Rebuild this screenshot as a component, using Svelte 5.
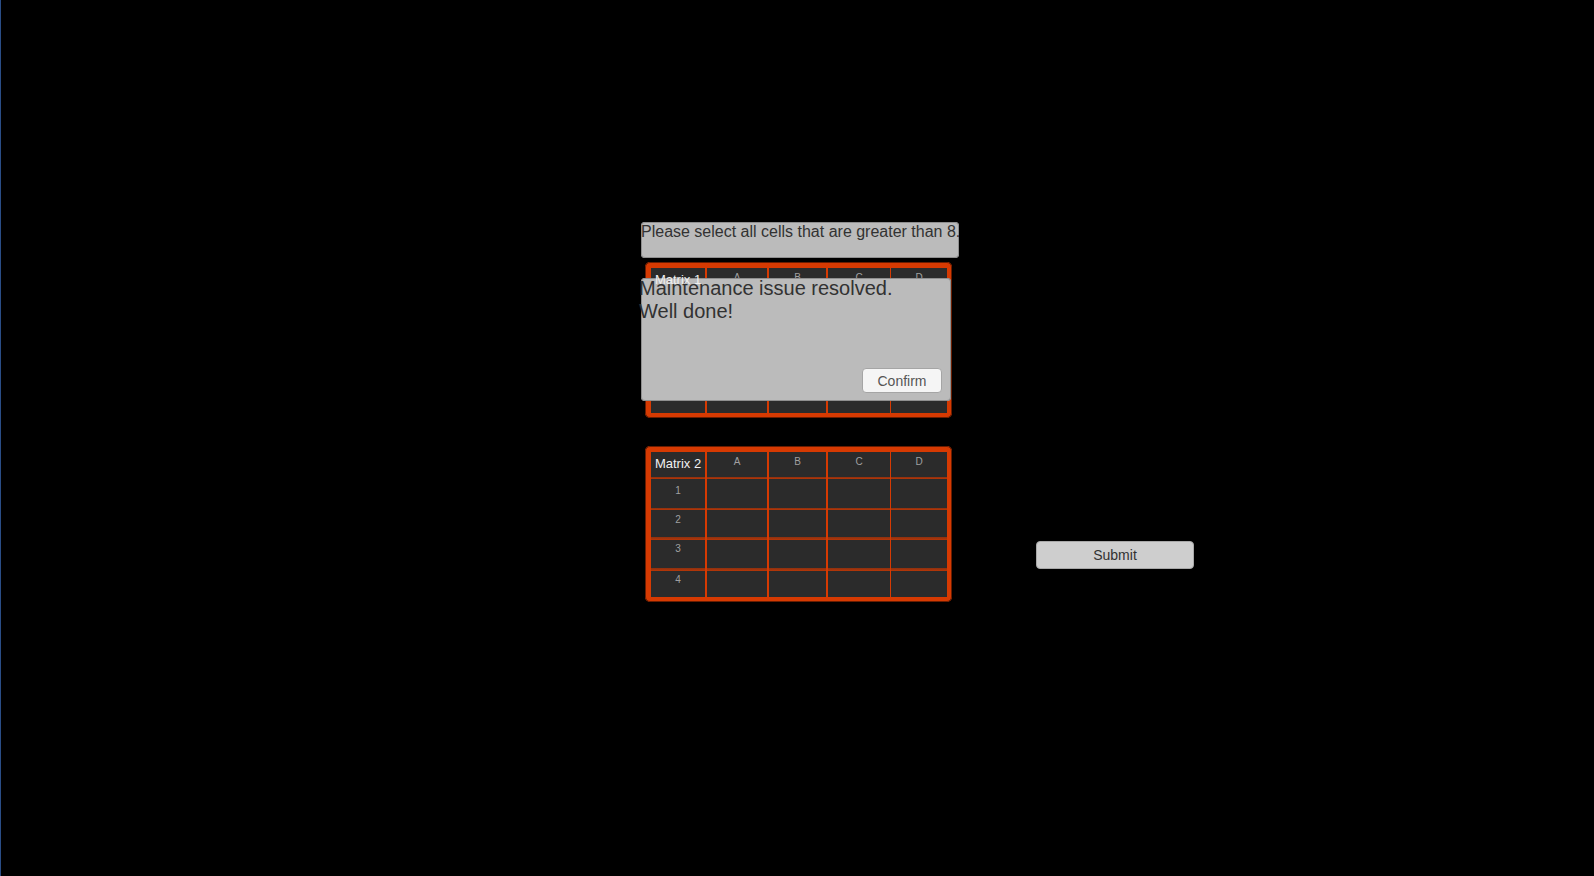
<script>
  const columns = ['A', 'B', 'C', 'D'];
  const rows = [1, 2, 3, 4];
  const matrices = ['Matrix 1', 'Matrix 2'];
  let open = $state(true);
</script>

<main>
  <section class="task">
    <p class="prompt">Please select all cells that are greater than 8.</p>
    <div class="matrices">
      {#each matrices as name}
        <table>
          <thead>
            <tr>
              <th class="name" scope="col"><span>{name}</span></th>
              {#each columns as c}<th scope="col">{c}</th>{/each}
            </tr>
          </thead>
          <tbody>
            {#each rows as r}
              <tr>
                <th scope="row">{r}</th>
                {#each columns as c}<td></td>{/each}
              </tr>
            {/each}
          </tbody>
        </table>
      {/each}
      {#if open}
        <div class="dialog" role="dialog" aria-label="Maintenance">
          <p>Maintenance issue resolved.<br />Well done!</p>
          <button class="confirm" onclick={() => (open = false)}>Confirm</button>
        </div>
      {/if}
    </div>
  </section>
  <button class="submit">Submit</button>
</main>

<style>
  :global(body) {
    margin: 0;
    background: #000;
  }
  main {
    box-sizing: border-box;
    min-height: 100vh;
    padding: 222px 0 24px 5px;
    border-left: 1px solid #2a4d86;
    display: grid;
    grid-template-columns: 1fr 318px 1fr;
    align-items: end;
    align-content: start;
    background: #000;
    font-family: "Liberation Sans", Arial, sans-serif;
    color: #323232;
  }
  p {
    margin: 0;
  }
  .task {
    grid-column: 2;
  }
  .prompt {
    height: 36px;
    border-radius: 4px;
    box-shadow: inset 0 0 0 1px #8f8f8f;
    background: #bbb;
    font-size: 16px;
    line-height: 20px;
    white-space: nowrap;
  }
  .matrices {
    position: relative;
    display: flex;
    flex-direction: column;
    gap: 28px;
    margin: 4px 7px 0 4px;
  }
  table {
    box-sizing: border-box;
    width: 100%;
    table-layout: fixed;
    border-collapse: separate;
    border-spacing: 0;
    border: 5px solid #d63a02;
    border-width: 6px 5px 5px 6px;
    outline: 1px solid #6a1d01;
    outline-offset: -1px;
    border-radius: 5px;
    background: #d63a02;
  }
  th,
  td {
    box-sizing: border-box;
    height: 31px;
    padding: 0;
    border-right: 2px solid #d63a02;
    background: linear-gradient(#8a3110, #b73607) bottom / 100% 2px no-repeat #2b2b2b;
    background-clip: padding-box;
    vertical-align: top;
    text-align: center;
    font-size: 10px;
    line-height: 24px;
    font-weight: 400;
    color: #a0a0a0;
  }
  thead th {
    height: 27px;
    line-height: 20px;
  }
  tr > :nth-child(1) { width: 56px; }
  tr > :nth-child(2) { width: 62px; }
  tr > :nth-child(3) { width: 59px; }
  tr > :nth-child(4) { width: 63px; border-right-width: 1px; }
  tr > :nth-child(5) { width: 56px; border-right: 0; }
  tbody tr:nth-child(n + 2) > * { line-height: 20px; }
  tbody tr:nth-child(n + 3) > * { line-height: 18px; }
  tbody tr:nth-child(2) > * { height: 30px; background-size: 100% 3px; }
  tbody tr:nth-child(3) > * { background-size: 100% 3px; }
  tbody tr:nth-child(4) > * { height: 26px; background-image: none; }
  thead .name {
    font-size: 13px;
    line-height: 24px;
    color: #f0f0f0;
    white-space: nowrap;
  }
  .name span {
    position: relative;
    z-index: 2;
  }
  .dialog {
    position: absolute;
    z-index: 1;
    top: 16px;
    left: -4px;
    right: 1px;
    box-sizing: border-box;
    height: 123px;
    border-radius: 4px;
    box-shadow: inset 0 0 0 1px #8f8f8f;
    background: #bbb;
    display: flex;
    flex-direction: column;
    justify-content: space-between;
  }
  .dialog p {
    margin: -1px 0 0 -2px;
    font-size: 20px;
    line-height: 23px;
  }
  button {
    box-sizing: border-box;
    padding: 0;
    border-radius: 4px;
    font: 14px/16px "Liberation Sans", Arial, sans-serif;
    color: #323232;
  }
  .confirm {
    align-self: flex-end;
    width: 80px;
    height: 25px;
    margin: 0 9px 8px 0;
    border: 1px solid #a5a5a5;
    background: #f5f5f5;
    color: #555;
  }
  .submit {
    grid-column: 3;
    width: 158px;
    height: 28px;
    margin: 0 0 33px 77px;
    border: 1px solid #a8a8a8;
    background: #cecece;
  }
</style>
